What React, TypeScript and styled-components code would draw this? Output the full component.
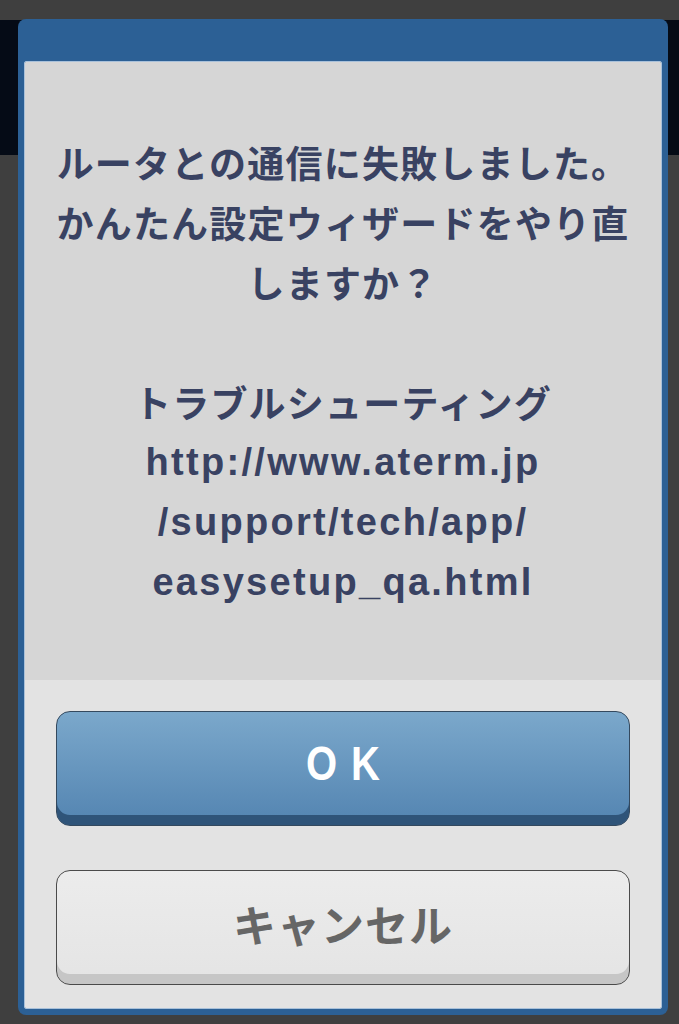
import React from "react"
import styled, { createGlobalStyle } from "styled-components"

const GlobalStyle = createGlobalStyle`
  html, body {
    margin: 0;
    padding: 0;
    background: #3f3f3f;
  }
  body {
    font-family: "Liberation Sans", "Noto Sans CJK JP", sans-serif;
  }
`

const Page = styled.div`
  position: relative;
  width: 679px;
  height: 1024px;
  overflow: hidden;
  background: #3f3f3f;
  display: flex;
  flex-direction: column;
`

const TopStrip = styled.div`
  height: 20px;
  background: #3f3f3f;
`

const AppHeader = styled.div`
  height: 135px;
  background: #050b16;
`

const Dialog = styled.div`
  position: absolute;
  top: 19px;
  left: 18px;
  width: 650px;
  height: 996px;
  box-sizing: border-box;
  background: #2c6095;
  border-radius: 8px;
  padding: 42px 6px 6px;
  display: flex;
`

const Panel = styled.div`
  flex: 1;
  display: flex;
  flex-direction: column;
  border: 1px solid #a9c1da;
  border-radius: 2px;
  overflow: hidden;
`

const MessageArea = styled.div`
  background: #d6d6d6;
  padding: 70px 20px 68px;
  display: flex;
  flex-direction: column;
  align-items: center;
  color: #394262;
  font-family: "Noto Sans CJK JP", sans-serif;
  font-weight: 700;
  font-size: 37px;
  line-height: 60px;
  text-align: center;
`

const Line = styled.div<{ $gap?: boolean }>`
  white-space: nowrap;
  letter-spacing: 1.2px;
  margin-top: ${(p) => (p.$gap ? "60px" : "0")};
`

const UrlLine = styled.div`
  white-space: nowrap;
  font-family: "Liberation Sans", sans-serif;
  font-size: 38px;
  letter-spacing: 2.3px;
`

const ButtonArea = styled.div`
  flex: 1;
  background: #e3e3e3;
  padding: 31px 31px 0;
  display: flex;
  flex-direction: column;
  gap: 44px;
`

const DialogButton = styled.button<{ $primary?: boolean }>`
  height: 115px;
  box-sizing: border-box;
  border-radius: 14px;
  border: 1.5px solid ${(p) => (p.$primary ? "#34495e" : "#4a4a4a")};
  background: ${(p) =>
    p.$primary
      ? "linear-gradient(#7ba8cb, #5384b1)"
      : "linear-gradient(#ececec, #e4e4e4)"};
  box-shadow: inset 0 -10px 0 ${(p) => (p.$primary ? "#2f5479" : "#c6c6c6")};
  padding: 0 0 10px;
  display: flex;
  align-items: center;
  justify-content: center;
  cursor: pointer;
`

const OkLabel = styled.span`
  color: #ffffff;
  font-family: "Liberation Sans", sans-serif;
  font-weight: 700;
  font-size: 40px;
  letter-spacing: 14px;
  margin-right: -14px;
  display: inline-block;
  transform: scaleY(1.2);
`

const CancelLabel = styled.span`
  color: #666666;
  font-family: "Noto Sans CJK JP", sans-serif;
  font-weight: 700;
  font-size: 43px;
  letter-spacing: 1px;
`

export default function App() {
  return (
    <Page>
      <GlobalStyle />
      <TopStrip />
      <AppHeader />
      <Dialog>
        <Panel>
          <MessageArea>
            <Line>ルータとの通信に失敗しました。</Line>
            <Line>かんたん設定ウィザードをやり直</Line>
            <Line>しますか？</Line>
            <Line $gap>トラブルシューティング</Line>
            <UrlLine>http://www.aterm.jp</UrlLine>
            <UrlLine>/support/tech/app/</UrlLine>
            <UrlLine>easysetup_qa.html</UrlLine>
          </MessageArea>
          <ButtonArea>
            <DialogButton $primary>
              <OkLabel>OK</OkLabel>
            </DialogButton>
            <DialogButton>
              <CancelLabel>キャンセル</CancelLabel>
            </DialogButton>
          </ButtonArea>
        </Panel>
      </Dialog>
    </Page>
  )
}
